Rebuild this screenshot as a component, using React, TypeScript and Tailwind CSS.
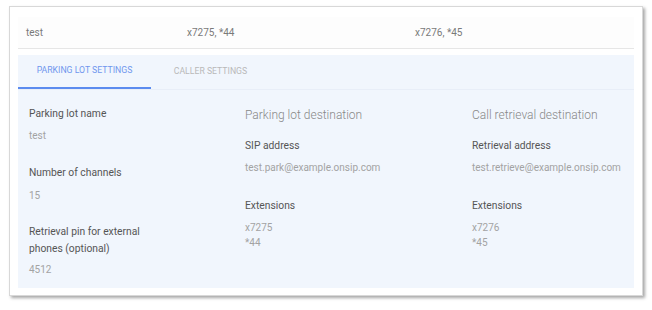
import React from "react";

export default function App() {
  return (
    <div className="w-[652px] h-[310px] bg-white pt-[6px] pl-[9px]" style={{ fontFamily: "Roboto, 'Liberation Sans', sans-serif" }}>
      <div className="w-[634px] h-[290px] bg-white border border-[#d8d8d8] shadow-[2px_2px_3px_rgba(0,0,0,0.35)] px-[8px] pt-[10px]">
        <div className="h-[32px] flex items-center border-b border-[#e6e6e6] text-[10px] text-[#7a7a7a] bg-[#fdfdfd]">
          <div className="w-[169px] pl-[8px]">test</div>
          <div className="w-[228px]">x7275, *44</div>
          <div>x7276, *45</div>
        </div>
        <div className="mt-[6px] h-[233px] bg-[#f1f6fd]">
          <div className="flex h-[35px] border-b border-[#e8eef8]">
            <div className="w-[133px] flex items-center justify-center text-[8.7px] text-[#7096ee] border-b-2 border-[#5b8bef]">PARKING LOT SETTINGS</div>
            <div className="w-[119px] flex items-center justify-center text-[8.7px] text-[#b9b9b9]">CALLER SETTINGS</div>
          </div>
          <div className="flex pt-[14px] text-[10px] leading-[20px]">
            <div className="w-[227px] pl-[11px]">
              <div className="text-[10.3px] text-[#555]">Parking lot name</div>
              <div className="mt-[2px] text-[#a3a3a3]">test</div>
              <div className="mt-[17px] text-[10.3px] text-[#555]">Number of channels</div>
              <div className="mt-[3px] text-[#a3a3a3]">15</div>
              <div className="mt-[17px] text-[10.3px] text-[#555] leading-[17px] w-[135px]">Retrieval pin for external phones (optional)</div>
              <div className="mt-[3px] text-[#a3a3a3]">4512</div>
            </div>
            <div className="w-[227px] pt-[1px]">
              <div className="text-[12px] font-light text-[#888]">Parking lot destination</div>
              <div className="mt-[11px] text-[10.3px] text-[#555]">SIP address</div>
              <div className="mt-[2px] text-[#a3a3a3]">test.park@example.onsip.com</div>
              <div className="mt-[18px] text-[10.3px] text-[#555]">Extensions</div>
              <div className="mt-[4px] leading-[15px] text-[#a3a3a3]">
                <div>x7275</div>
                <div>*44</div>
              </div>
            </div>
            <div className="pt-[1px]">
              <div className="text-[12px] font-light text-[#888]">Call retrieval destination</div>
              <div className="mt-[11px] text-[10.3px] text-[#555]">Retrieval address</div>
              <div className="mt-[2px] text-[#a3a3a3]">test.retrieve@example.onsip.com</div>
              <div className="mt-[18px] text-[10.3px] text-[#555]">Extensions</div>
              <div className="mt-[4px] leading-[15px] text-[#a3a3a3]">
                <div>x7276</div>
                <div>*45</div>
              </div>
            </div>
          </div>
        </div>
      </div>
    </div>
  );
}
